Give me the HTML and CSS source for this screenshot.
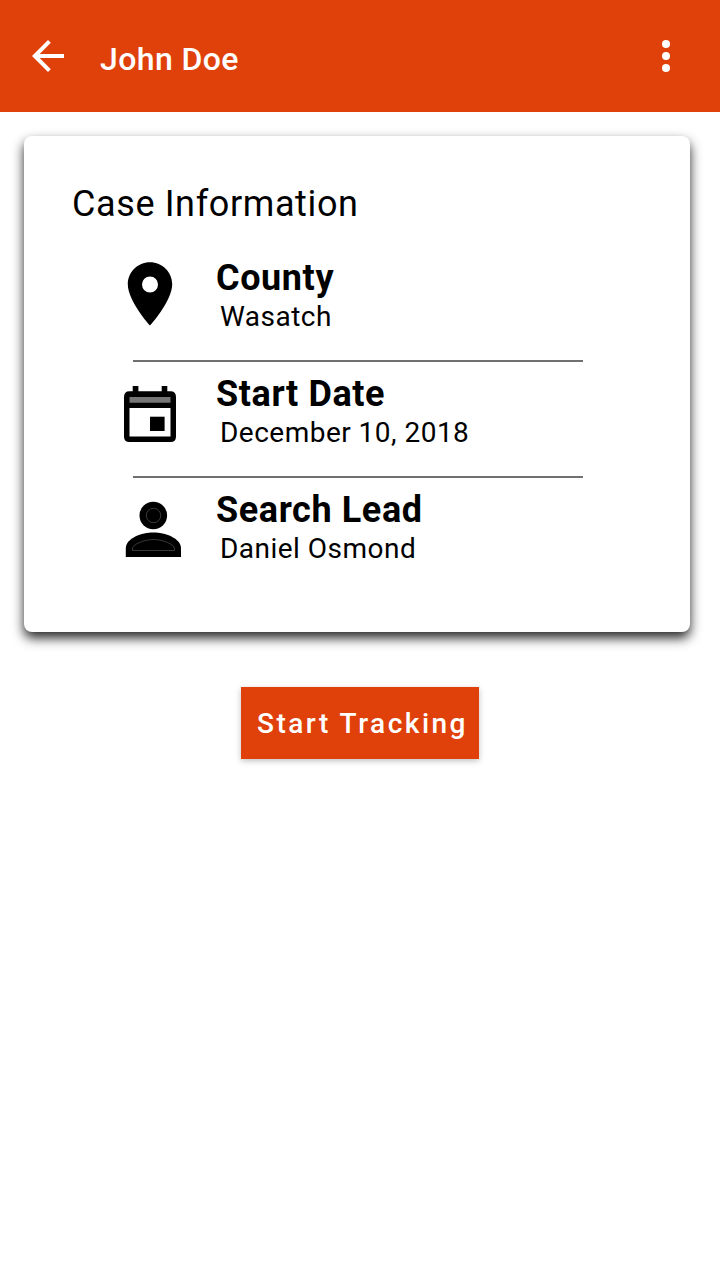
FILE: index.html
```
<!DOCTYPE html>
<html lang="en">
<head>
<meta charset="utf-8">
<title>John Doe</title>
<link rel="stylesheet" href="styles.css">
</head>
<body>
<header class="app-bar">
  <svg class="back" width="32" height="32" viewBox="4 4 16 16"><path d="M20 11H7.830l5.590-5.590L12 4l-8 8 8 8 1.410-1.410L7.830 13H20v-2z"/></svg>
  <h1 class="app-title">John Doe</h1>
  <svg class="more" width="8" height="32" viewBox="0 0 8 32"><circle cx="4" cy="4" r="4"/><circle cx="4" cy="16" r="4"/><circle cx="4" cy="28" r="4"/></svg>
</header>
<main>
  <section class="card">
    <h2 class="card-title">Case Information</h2>
    <div class="row">
      <svg class="icon" width="64" height="72" viewBox="0 0 64 72"><path fill-rule="evenodd" d="M30 4.200C17.700 4.200 7.800 14 7.800 26.200C7.800 42.800 30 67.600 30 67.600S52.200 42.800 52.200 26.200C52.200 14 42.300 4.200 30 4.200ZM30 18.500A8 8 0 1 1 30 34.500A8 8 0 1 1 30 18.500Z"/></svg>
      <div class="text"><div class="label">County</div><div class="value">Wasatch</div></div>
    </div>
    <hr class="divider">
    <div class="row">
      <svg class="icon" width="64" height="72" viewBox="0 0 64 72"><path fill-rule="evenodd" d="M12.700 12H18.400V17.200H41.700V12H47.300V17.200H50.500Q56 17.200 56 23V62.500Q56 68 50.500 68H9.500Q4 68 4 62.500V23Q4 17.200 9.500 17.200H12.700ZM9.500 34V62.500H50.500V34Z"/><path class="band" d="M9.500 23H50.500V28.700H9.500Z"/><path d="M30 42.700H44.600V57H30Z"/></svg>
      <div class="text"><div class="label">Start Date</div><div class="value">December 10, 2018</div></div>
    </div>
    <hr class="divider">
    <div class="row">
      <svg class="icon" width="64" height="72" viewBox="0 0 64 72"><circle cx="33.300" cy="25.500" r="13.800"/><path d="M5.800 67V58.500C5.800 48 22 42.500 33.400 42.500S61 48 61 58.500V67Z"/><circle class="trace" cx="33.500" cy="25.500" r="7.200"/><path class="trace" d="M12.500 60.500V58.500C12.500 54.500 24 49.500 33.500 49.500S54.500 54.500 54.500 58.500V60.500Z"/></svg>
      <div class="text"><div class="label">Search Lead</div><div class="value">Daniel Osmond</div></div>
    </div>
  </section>
  <button class="start">Start Tracking</button>
</main>
</body>
</html>
```
FILE: styles.css
```
body {
  margin: 0;
  min-height: 100vh;
  background: #fff;
  color: #000;
  font-family: Roboto, sans-serif;
}
h1, h2 { margin: 0; }
svg { display: block; }
.app-bar {
  display: flex;
  align-items: center;
  height: 112px;
  box-sizing: border-box;
  padding: 0 50px 0 32px;
  background: #e0410b;
  color: #fff;
}
.back, .more { fill: #fff; }
.app-title {
  margin: 6px auto 0 36px;
  font-size: 32px;
  line-height: 38px;
  font-weight: 500;
  letter-spacing: 0.4px;
}
main {
  display: flex;
  flex-direction: column;
  align-items: center;
  padding: 24px 30px 24px 24px;
}
.card {
  box-sizing: border-box;
  width: 666px;
  height: 496px;
  padding-top: 47px;
  border-radius: 8px;
  background: #fff;
  box-shadow: 0 6px 12px rgba(0, 0, 0, 0.85);
}
.card-title {
  margin: 0 0 21px 48px;
  font-size: 36px;
  line-height: 42px;
  font-weight: 400;
  letter-spacing: 0.62px;
}
.row {
  display: flex;
  gap: 32px;
  height: 114px;
  padding-left: 96px;
}
.icon { margin-top: 12px; }
.text { padding-top: 11px; }
.label {
  font-size: 36px;
  line-height: 42px;
  font-weight: 700;
  letter-spacing: 0.6px;
}
.value {
  padding-left: 4px;
  font-size: 28px;
  line-height: 36px;
  letter-spacing: 0.48px;
}
.divider {
  width: 450px;
  height: 2px;
  margin: 0 0 0 109px;
  border: 0;
  background: #707070;
}
.band { fill: #757575; }
.trace { fill: none; stroke: #606060; stroke-width: 0.6px; }
.start {
  width: 238px;
  height: 72px;
  margin: 55px 0 0 6px;
  padding: 2px 0 0 5px;
  border: 0;
  background: #e0410b;
  color: #fff;
  box-shadow: 0 2px 6px rgba(0, 0, 0, 0.25);
  font: 500 28px/34px Roboto, sans-serif;
  letter-spacing: 2.5px;
  white-space: nowrap;
}
```
